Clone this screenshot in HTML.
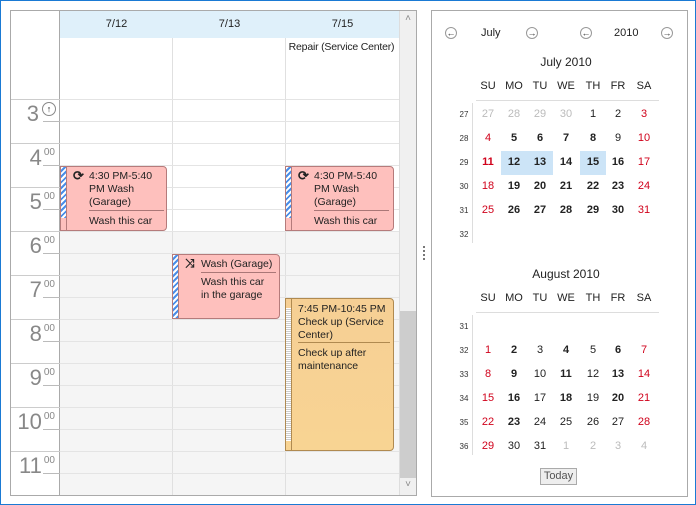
<html><head><style>
*{margin:0;padding:0;box-sizing:border-box}
body{width:696px;height:505px;position:relative;background:#fff;font-family:"Liberation Sans",sans-serif;font-size:11px;color:#222;overflow:hidden;border:1px solid #1a7ad4}
.a{position:absolute;white-space:nowrap}
.hl{position:absolute;left:59px;width:339px;height:1px;background:#e4e4e4}
.vl{position:absolute;top:37px;width:1px;height:457px;background:#e0e0e0}
.hr{position:absolute;left:14px;width:40px;text-align:right;color:#888;font-size:22px;line-height:22px}
.hr span{font-size:10px;vertical-align:top;line-height:12px;margin-left:2px}
.tl{position:absolute;left:42px;width:17px;height:1px;background:#bbb}
.tb{position:absolute;left:10px;width:49px;height:1px;background:#ccc}
.ev{position:absolute;border:1px solid #b57b7b;border-radius:0 4px 4px 0;background:#fec0bd;font-size:10.5px;line-height:13px;color:#222}
.st{position:absolute;left:0;top:0;width:5px;background:repeating-linear-gradient(135deg,#fff 0 2px,#4a8ee8 2px 4px);}
.c{position:absolute;width:26px;text-align:center;font-size:11px}
.w{position:absolute;left:455px;width:16px;text-align:center;font-size:8px;color:#333}
.b{font-weight:bold}.r{color:#d0021b}.g{color:#bbb}
.nav{position:absolute;width:12px;height:12px;border:1px solid #999;border-radius:50%;font-size:9px;line-height:10px;text-align:center;color:#333}
</style></head><body>
<div class="a" style="left:9px;top:9px;width:407px;height:486px;border:1px solid #aaa"></div>
<div class="a" style="left:59px;top:10px;width:339px;height:27px;background:#dff0fa"></div>
<div class="a" style="left:59px;top:230px;width:339px;height:264px;background:#f5f5f5"></div>
<div class="a" style="left:58px;top:10px;width:1px;height:484px;background:#aaa"></div>
<div class="a" style="left:59px;top:17px;width:113px;text-align:center">7/12</div>
<div class="a" style="left:172px;top:17px;width:113px;text-align:center">7/13</div>
<div class="a" style="left:285px;top:17px;width:113px;text-align:center">7/15</div>
<div class="a" style="left:283px;top:40px;width:115px;text-align:center;font-size:10.5px;letter-spacing:-0.2px">Repair (Service Center)</div>
<div class="vl" style="left:171px"></div><div class="vl" style="left:284px"></div>
<div class="hl" style="top:98px"></div><div class="hl" style="top:120px"></div>
<div class="hl" style="top:142px"></div><div class="hl" style="top:164px"></div>
<div class="hl" style="top:186px"></div><div class="hl" style="top:208px"></div>
<div class="hl" style="top:230px"></div><div class="hl" style="top:252px"></div>
<div class="hl" style="top:274px"></div><div class="hl" style="top:296px"></div>
<div class="hl" style="top:318px"></div><div class="hl" style="top:340px"></div>
<div class="hl" style="top:362px"></div><div class="hl" style="top:384px"></div>
<div class="hl" style="top:406px"></div><div class="hl" style="top:428px"></div>
<div class="hl" style="top:450px"></div><div class="hl" style="top:472px"></div>
<div class="tb" style="top:98px"></div><div class="tb" style="top:142px"></div><div class="tb" style="top:186px"></div><div class="tb" style="top:230px"></div><div class="tb" style="top:274px"></div><div class="tb" style="top:318px"></div><div class="tb" style="top:362px"></div><div class="tb" style="top:406px"></div><div class="tb" style="top:450px"></div>
<div class="tl" style="top:120px"></div><div class="tl" style="top:164px"></div><div class="tl" style="top:208px"></div><div class="tl" style="top:252px"></div><div class="tl" style="top:296px"></div><div class="tl" style="top:340px"></div><div class="tl" style="top:384px"></div><div class="tl" style="top:428px"></div><div class="tl" style="top:472px"></div>
<div class="hr" style="top:102px;left:10px;width:28px">3</div>
<div class="a" style="left:41px;top:101px;width:14px;height:14px;border:1px solid #888;border-radius:50%;font-size:9px;line-height:12px;text-align:center;background:#fff">↑</div>
<div class="hr" style="top:146px">4<span>00</span></div>
<div class="hr" style="top:190px">5<span>00</span></div>
<div class="hr" style="top:234px">6<span>00</span></div>
<div class="hr" style="top:278px">7<span>00</span></div>
<div class="hr" style="top:322px">8<span>00</span></div>
<div class="hr" style="top:366px">9<span>00</span></div>
<div class="hr" style="top:410px">10<span>00</span></div>
<div class="hr" style="top:454px">11<span>00</span></div>
<div class="a" style="left:398px;top:10px;width:17px;height:484px;background:#f0f0f0;border-left:1px solid #ddd"></div>
<div class="a" style="left:399px;top:310px;width:16px;height:167px;background:#cdcdcd"></div>
<div class="a" style="left:399px;top:12px;width:16px;text-align:center;color:#888;font-size:10px">˄</div>
<div class="a" style="left:399px;top:478px;width:16px;text-align:center;color:#888;font-size:10px">˅</div>
<div class="ev" style="left:59px;top:165px;width:107px;height:65px"><div class="st" style="height:51px"></div><div class="a" style="left:5px;top:0;width:1px;height:63px;background:#b57b7b"></div>
<div class="a" style="left:12px;top:2px;font-size:13px;font-weight:bold">⟳</div><div class="a" style="left:28px;top:3px">4:30 PM-5:40</div><div class="a" style="left:28px;top:16px;line-height:13px">PM Wash<br>(Garage)</div><div class="a" style="left:28px;top:43px;width:75px;height:1px;background:#a77"></div><div class="a" style="left:28px;top:48px">Wash this car</div></div>
<div class="ev" style="left:284px;top:165px;width:109px;height:65px"><div class="st" style="height:51px"></div><div class="a" style="left:5px;top:0;width:1px;height:63px;background:#b57b7b"></div>
<div class="a" style="left:12px;top:2px;font-size:13px;font-weight:bold">⟳</div><div class="a" style="left:28px;top:3px">4:30 PM-5:40</div><div class="a" style="left:28px;top:16px">PM Wash<br>(Garage)</div><div class="a" style="left:28px;top:43px;width:75px;height:1px;background:#a77"></div><div class="a" style="left:28px;top:48px">Wash this car</div></div>
<div class="ev" style="left:171px;top:253px;width:108px;height:65px"><div class="st" style="height:63px"></div><div class="a" style="left:5px;top:0;width:1px;height:63px;background:#b57b7b"></div>
<div class="a" style="left:12px;top:2px;font-size:12px;font-weight:bold">⤨</div><div class="a" style="left:28px;top:3px">Wash (Garage)</div><div class="a" style="left:28px;top:17px;width:75px;height:1px;background:#a77"></div><div class="a" style="left:28px;top:21px">Wash this car<br>in the garage</div></div>
<div class="ev" style="left:284px;top:297px;width:109px;height:153px;background:linear-gradient(#f6cf94,#f8d493);border-color:#b08a50"><div class="a" style="left:0;top:9px;width:5px;height:133px;background:repeating-linear-gradient(#fff 0 1px,#ccc 1px 2px)"></div><div class="a" style="left:5px;top:0;width:1px;height:151px;background:#b08a50"></div>
<div class="a" style="left:12px;top:4px;line-height:13px">7:45 PM-10:45 PM<br>Check up (Service<br>Center)</div><div class="a" style="left:12px;top:43px;width:92px;height:1px;background:#b08a50"></div><div class="a" style="left:12px;top:48px;line-height:13px">Check up after<br>maintenance</div></div>
<div class="a" style="left:422px;top:245px;width:2px;height:14px;background:repeating-linear-gradient(#777 0 2px,transparent 2px 4px)"></div>
<div class="a" style="left:430px;top:9px;width:257px;height:487px;border:1px solid #aaa"></div>
<div class="nav" style="left:444px;top:26px">←</div><div class="a" style="left:480px;top:26px">July</div><div class="nav" style="left:525px;top:26px">→</div>
<div class="nav" style="left:579px;top:26px">←</div><div class="a" style="left:613px;top:26px">2010</div><div class="nav" style="left:660px;top:26px">→</div>
<div class="a" style="left:474px;top:54px;width:182px;text-align:center;font-size:12px">July 2010</div>
<div class="a" style="left:474px;top:266px;width:182px;text-align:center;font-size:12px">August 2010</div>
<div class="a" style="left:475px;top:99px;width:183px;height:1px;background:#ddd"></div>
<div class="a" style="left:471px;top:102px;width:1px;height:140px;background:#ddd"></div>
<div class="a" style="left:475px;top:311px;width:183px;height:1px;background:#ddd"></div>
<div class="a" style="left:471px;top:314px;width:1px;height:140px;background:#ddd"></div>
<div class="a" style="left:500px;top:150px;width:52px;height:24px;background:#cce4f7"></div>
<div class="a" style="left:579px;top:150px;width:26px;height:24px;background:#cce4f7"></div>
<div id="cal"></div>
<div class="a" style="left:539px;top:467px;width:37px;height:17px;border:1px solid #aaa;background:#eee;text-align:center;line-height:15px;font-size:11px;color:#555">Today</div>
<script>
var X=[487,513,539,565,592,617,643],H=["SU","MO","TU","WE","TH","FR","SA"],s="";
function c(x,y,t,cl){s+='<div class="c '+(cl||'')+'" style="left:'+(x-13)+'px;top:'+(y-7)+'px">'+t+'</div>';}
function hdr(y){for(var i=0;i<7;i++)c(X[i],y,H[i]);}
hdr(86);hdr(298);
var J=[["27g","28g","29g","30g","1","2","3r"],["4r","5b","6b","7b","8b","9","10r"],["11rb","12b","13b","14b","15b","16b","17r"],["18r","19b","20b","21b","22b","23b","24r"],["25r","26b","27b","28b","29b","30b","31r"]];
var A=[[],["1r","2b","3","4b","5","6b","7r"],["8r","9b","10","11b","12","13b","14r"],["15r","16b","17","18b","19","20b","21r"],["22r","23b","24","25","26","27","28r"],["29r","30","31","1g","2g","3g","4g"]];
function m(R,y0,w0){for(var r=0;r<6;r++){var y=y0+r*24;s+='<div class="w" style="top:'+(y-5)+'px">'+(w0+r)+'</div>';var row=R[r]||[];for(var i=0;i<row.length;i++){var t=row[i].match(/\d+/)[0],f=row[i].replace(/\d+/,'');c(X[i],y,t,f.split('').join(' '));}}}
m(J,114,27);m(A,326,31);
document.getElementById('cal').outerHTML=s;
</script>
</body></html>
